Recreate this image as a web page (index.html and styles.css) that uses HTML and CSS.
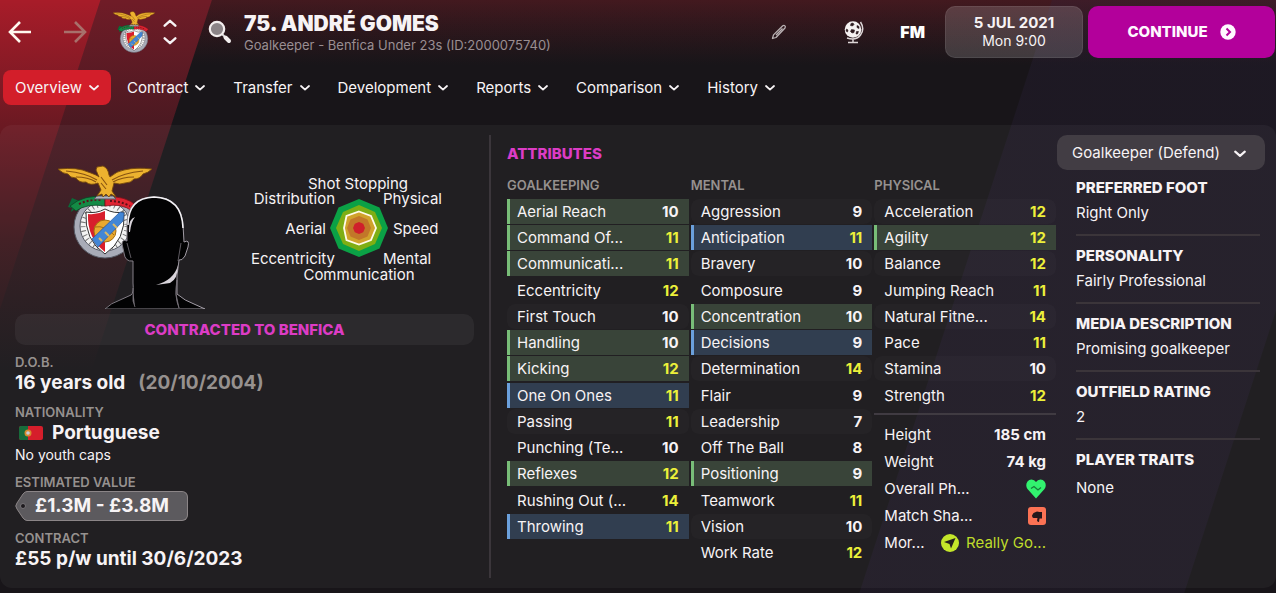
FILE: index.html
```html
<!DOCTYPE html>
<html lang="en">
  <head>
    <meta charset="UTF-8" />
    <meta name="viewport" content="width=device-width, initial-scale=1.0" />
    <title>André Gomes - Overview</title>
    <link rel="stylesheet" href="styles.css">
  </head>
  <body>
    <!-- shared icons -->
    <svg class="defs" aria-hidden="true">
      <symbol id="chevron" viewBox="0 0 10 6">
        <path d="M1 1l4 3.6L9 1" fill="none" stroke="currentColor" stroke-width="1.8" stroke-linecap="round" stroke-linejoin="round" />
      </symbol>
      <symbol id="crest" viewBox="0 0 94 94">
        <path d="M14 33l-4 9 4 1-1 4c6-5 12-7 18-7z" fill="#0b6b39" />
        <circle cx="47" cy="62" r="31" fill="#a9acb8" stroke="#555964" stroke-width="1" />
        <circle cx="47" cy="61" r="25" fill="#f3f3f3" stroke="#555964" stroke-width="1" />
        <circle cx="47" cy="61" r="22" fill="none" stroke="#777" stroke-width="5" stroke-dasharray="1 3.5" />
        <path d="M28 47q10 2 19-3 9 5 19 3 2 28-19 42-21-14-19-42z" fill="#fff" stroke="#333" stroke-width="1" />
        <path d="M30 49q9 1 17-3v41Q29 73 30 49z" fill="#d81e2c" />
        <circle cx="47" cy="66" r="11" fill="#e9a92f" stroke="#a56e12" stroke-width="1" />
        <path d="M37 62q10-2 19 8M40 73q2-10 13-15" fill="none" stroke="#a56e12" />
        <path d="M34 74l28-27 4 1-1 8-25 26z" fill="#4286d6" stroke="#28569b" stroke-width=".7" />
        <path d="M41 73l3 3M47 67l4 4M55 59l4 4" stroke="#d9b868" stroke-width="2" />
        <path d="M12 41q14-12 35-9v9q-18-3-29 5z" fill="#148a45" stroke="#0a4524" stroke-width=".8" />
        <path d="M47 32q20-2 32 9l-5 5q-10-8-27-5z" fill="#df2331" stroke="#7d0f19" stroke-width=".8" />
        <path d="M21 39q11-5 22-4M52 36q10 0 20 5" fill="none" stroke="#5b1018" stroke-width="2" stroke-dasharray="2 2" />
        <path d="M39 31h16l3 3H36z" fill="#b4b6bf" stroke="#565963" />
        <path d="M0 4q20-2 30 3 9 3 11 5l-3-7 1-3 6-1q5 2 6 9l1 2q7-6 14-7 12-3 28-1-4 4-9 5-3 5-9 5-3 4-9 4-5 2-11 0l-2 8 4 6-5-3-2 3-3-3-3 3-1-3-5 2 4-6-3-7q-8 3-12-1-7 1-10-4-6 0-8-4-5 0-10-5z" fill="#edb22f" stroke="#76490b" stroke-width=".9" />
        <path d="M8 6q20 2 31 9M18 12q12 0 20 5M85 6q-20 2-31 9M76 12q-12 0-21 5M43 12l6 8M43 18l5 6" fill="none" stroke="#885411" stroke-width="1.1" />
      </symbol>
    </svg>

    <header class="topbar">
      <button class="icon-btn" aria-label="Back">
        <svg width="24" height="24" viewBox="0 0 24 24"><path d="M12 2L2 12l10 10M2 12h21" fill="none" stroke="#fff8ee" stroke-width="2.6" /></svg>
      </button>
      <button class="icon-btn forward" aria-label="Forward">
        <svg width="24" height="24" viewBox="0 0 24 24"><path d="M12 2l10 10-10 10M22 12H1" fill="none" stroke="#a8706b" stroke-width="2.6" /></svg>
      </button>
      <svg class="club" width="42" height="42" role="img" aria-label="Benfica"><use href="#crest" /></svg>
      <div class="stepper">
        <button class="icon-btn" aria-label="Previous player"><svg class="flip" width="14" height="8"><use href="#chevron" /></svg></button>
        <button class="icon-btn" aria-label="Next player"><svg width="14" height="8"><use href="#chevron" /></svg></button>
      </div>
      <button class="icon-btn search" aria-label="Search">
        <svg width="24" height="24" viewBox="0 0 24 24"><path d="M14 14l2.5 2.5" stroke="#ddd" stroke-width="2" /><path d="M17.500 17.500l3.500 3.500" stroke="#f3eeee" stroke-width="4" stroke-linecap="round" /><circle cx="9" cy="9" r="7.200" fill="#8b8487" stroke="#f3eeee" stroke-width="2.200" /></svg>
      </button>
      <div class="player-name">
        <h1>75. ANDRÉ GOMES</h1>
        <p>Goalkeeper - Benfica Under 23s (ID:2000075740)</p>
      </div>
      <button class="icon-btn edit" aria-label="Edit">
        <svg width="16" height="16" viewBox="0 0 16 16"><path d="M1.500 14.500l1-3.600L11.800 1.800q1.200-.8 2.100.1t.1 2.100L5 13.500zM5 11L11.500 4.500" fill="none" stroke="#b9b1b3" stroke-width="1.300" stroke-linejoin="round" /></svg>
      </button>
      <button class="icon-btn world" aria-label="World">
        <svg width="22" height="24" viewBox="0 0 22 24"><circle cx="10" cy="9.500" r="8.300" fill="#f5f1f1" /><path d="M8 3.500l2-.5 1 1.500-1.500 1.500-2-.5zM14 5.500l2 1v2l-2-1zM8.500 9.500l3 .5-.5 2.500-2 .5-1.500-1.500zM3.500 9l1.500 1-.5 2-1.500-1zM13.500 11.500l2 0-1 2.500-1.500 0z" fill="#2c1a1e" stroke="#2c1a1e" stroke-width=".6" /><path d="M17.500 2q4.500 7 0 13t-13.500 3M10 19v3M5 22.500h10" fill="none" stroke="#dcd5d6" stroke-width="1.500" /></svg>
      </button>
      <a class="fm" href="#">FM</a>
      <button class="date"><b>5 JUL 2021</b><span>Mon 9:00</span></button>
      <button class="continue">CONTINUE
        <svg width="16" height="16" viewBox="0 0 16 16"><circle cx="8" cy="8" r="7.700" fill="#fff8ff" /><path d="M6.500 4.500L10 8l-3.500 3.500" fill="none" stroke="#b3009b" stroke-width="2" /></svg>
      </button>
    </header>

    <nav class="tabs">
      <button class="active">Overview <svg><use href="#chevron" /></svg></button>
      <button>Contract <svg><use href="#chevron" /></svg></button>
      <button>Transfer <svg><use href="#chevron" /></svg></button>
      <button>Development <svg><use href="#chevron" /></svg></button>
      <button>Reports <svg><use href="#chevron" /></svg></button>
      <button>Comparison <svg><use href="#chevron" /></svg></button>
      <button>History <svg><use href="#chevron" /></svg></button>
    </nav>

    <main class="panel">
      <section class="bio">
        <div class="portrait">
          <svg width="160" height="149" viewBox="0 0 160 149" role="img" aria-label="Player portrait">
            <defs>
              <linearGradient id="rim" x1="0" y1="0" x2="1" y2="0">
                <stop offset="0" stop-color="#77727a" />
                <stop offset="1" stop-color="#a9a3ad" />
              </linearGradient>
            </defs>
            <use href="#crest" x="3" y="5" width="94" height="94" />
            <path d="M50 149q6-6 15-9l11-5q3-2 2-12V101q-8 1-9-8l-2-9q0-5 5-3V65q0-28 27-28t29 28l1 17q6-3 4 5l-3 9q-3 5-6 4-1 9-2 15v19q8 7 17 10l11 5z" fill="#020203" stroke="url(#rim)" stroke-width="1" />
            <path d="M73 65q0-27 26-28 28 1 29 31" fill="none" stroke="#f4f2f6" stroke-width="1.500" />
            <path d="M74 72q-1-13 6-15-4 5-5 15zM101 125q18-5 22-20 0 14-8 18-7 1-14 2z" fill="#d8d3da" />
            <path d="M122 120l-1 14 3 14q-5-12-2-28zM78 128v13l2 6M126 83l-3 18M72 83l4 15" fill="#77727a" stroke="#77727a" stroke-width=".8" />
          </svg>
          <svg class="radar" width="200" height="116" viewBox="0 0 200 116" role="img" aria-label="Attribute analyser">
            <g transform="translate(115 57)">
              <path d="M0-29L20.500-20.500 29 0 20.500 20.500 0 29-20.500 20.500-29 0-20.500-20.500z" fill="#0ba146" />
              <path d="M0-23L16-16 23 0 16 16 0 23-16 16-23 0-16-16z" fill="#7fae14" />
              <path d="M0-16.500L12-12 17 0 12 12 0 16.500-12.500 12-15 0-12.500-12z" fill="#d0a22b" stroke="#fffbe8" stroke-width="1.800" />
              <path d="M0-12L8.500-8.500 12 0 8.500 8.500 0 12-8.500 8.500-12 0-8.500-8.500z" fill="#c27729" />
              <path d="M0-6L4.200-4.200 6 0 4.200 4.200 0 6-4.200 4.200-6 0-4.200-4.200z" fill="#cf1f2b" />
            </g>
            <g class="middle"><text x="114" y="18">Shot Stopping</text><text x="115" y="109">Communication</text></g>
            <g class="end"><text x="91" y="33">Distribution</text><text x="82" y="63">Aerial</text><text x="91" y="93">Eccentricity</text></g>
            <g><text x="139" y="33">Physical</text><text x="149" y="63">Speed</text><text x="139" y="93">Mental</text></g>
          </svg>
        </div>

        <h2 class="contracted">CONTRACTED TO BENFICA</h2>

        <dl class="facts">
          <div>
            <dt>D.O.B.</dt>
            <dd>16 years old <span class="born">(20/10/2004)</span></dd>
          </div>
          <div>
            <dt>NATIONALITY</dt>
            <dd>
              <svg class="flag" width="24" height="14" viewBox="0 0 24 14"><rect width="24" height="14" rx="2" fill="#d61e2b" /><path d="M2 0h7v14H2q-2 0-2-2V2q0-2 2-2z" fill="#176b3b" /><circle cx="9" cy="7" r="3.500" fill="#d78a2b" /><circle cx="9" cy="7" r="1.800" fill="#c9ccd8" /></svg>
              Portuguese
            </dd>
            <dd class="small">No youth caps</dd>
          </div>
          <div>
            <dt>ESTIMATED VALUE</dt>
            <dd class="price">
              <svg width="20" height="30" viewBox="0 0 20 30"><path d="M20 .5h-8q-2 0-4 2.500L2 12q-2.500 3 0 6l6 9q2 2.500 4 2.500h8z" fill="#5c5a5e" /><path d="M20 .5h-8q-2 0-4 2.500L2 12q-2.500 3 0 6l6 9q2 2.500 4 2.500h8" fill="none" stroke="#8b8587" /><circle cx="8" cy="15" r="2.500" fill="#1d1a1e" stroke="#777478" /></svg>
              <span>£1.3M - £3.8M</span>
            </dd>
          </div>
          <div>
            <dt>CONTRACT</dt>
            <dd>£55 p/w until 30/6/2023</dd>
          </div>
        </dl>
      </section>

      <section class="attributes">
        <h2>ATTRIBUTES</h2>
        <div class="columns">
          <table>
            <caption>GOALKEEPING</caption>
            <tbody>
              <tr class="key"><th scope="row">Aerial Reach</th><td>10</td></tr>
              <tr class="key"><th scope="row">Command Of...</th><td class="good">11</td></tr>
              <tr class="key"><th scope="row">Communicati...</th><td class="good">11</td></tr>
              <tr><th scope="row">Eccentricity</th><td class="good">12</td></tr>
              <tr><th scope="row">First Touch</th><td>10</td></tr>
              <tr class="key"><th scope="row">Handling</th><td>10</td></tr>
              <tr class="key"><th scope="row">Kicking</th><td class="good">12</td></tr>
              <tr class="useful"><th scope="row">One On Ones</th><td class="good">11</td></tr>
              <tr><th scope="row">Passing</th><td class="good">11</td></tr>
              <tr><th scope="row">Punching (Te...</th><td>10</td></tr>
              <tr class="key"><th scope="row">Reflexes</th><td class="good">12</td></tr>
              <tr><th scope="row">Rushing Out (...</th><td class="good">14</td></tr>
              <tr class="useful"><th scope="row">Throwing</th><td class="good">11</td></tr>
            </tbody>
          </table>

          <table>
            <caption>MENTAL</caption>
            <tbody>
              <tr><th scope="row">Aggression</th><td>9</td></tr>
              <tr class="useful"><th scope="row">Anticipation</th><td class="good">11</td></tr>
              <tr><th scope="row">Bravery</th><td>10</td></tr>
              <tr><th scope="row">Composure</th><td>9</td></tr>
              <tr class="key"><th scope="row">Concentration</th><td>10</td></tr>
              <tr class="useful"><th scope="row">Decisions</th><td>9</td></tr>
              <tr><th scope="row">Determination</th><td class="good">14</td></tr>
              <tr><th scope="row">Flair</th><td>9</td></tr>
              <tr><th scope="row">Leadership</th><td>7</td></tr>
              <tr><th scope="row">Off The Ball</th><td>8</td></tr>
              <tr class="key"><th scope="row">Positioning</th><td>9</td></tr>
              <tr><th scope="row">Teamwork</th><td class="good">11</td></tr>
              <tr><th scope="row">Vision</th><td>10</td></tr>
              <tr><th scope="row">Work Rate</th><td class="good">12</td></tr>
            </tbody>
          </table>

          <div>
            <table>
              <caption>PHYSICAL</caption>
              <tbody>
                <tr><th scope="row">Acceleration</th><td class="good">12</td></tr>
                <tr class="key"><th scope="row">Agility</th><td class="good">12</td></tr>
                <tr><th scope="row">Balance</th><td class="good">12</td></tr>
                <tr><th scope="row">Jumping Reach</th><td class="good">11</td></tr>
                <tr><th scope="row">Natural Fitne...</th><td class="good">14</td></tr>
                <tr><th scope="row">Pace</th><td class="good">11</td></tr>
                <tr><th scope="row">Stamina</th><td>10</td></tr>
                <tr><th scope="row">Strength</th><td class="good">12</td></tr>
              </tbody>
            </table>
            <dl class="condition">
              <div><dt>Height</dt><dd>185 cm</dd></div>
              <div><dt>Weight</dt><dd>74 kg</dd></div>
              <div>
                <dt>Overall Ph...</dt>
                <dd><svg width="20" height="20" viewBox="0 0 20 20" role="img" aria-label="Fit"><path d="M10 19.500L1.500 10Q-1 6 1.500 2.500 3 .5 5.500 .5 8.500 .5 10 3q1.500-2.500 4.500-2.500 2.500 0 4 2Q21 6 18.500 10z" fill="#32f26f" /><path d="M5 9.500l3-2 4 3.500 3-2.500" fill="none" stroke="#187a3a" stroke-width="1.300" /></svg></dd>
              </div>
              <div>
                <dt>Match Sha...</dt>
                <dd><svg width="18" height="18" viewBox="0 0 18 18" role="img" aria-label="Poor"><rect width="18" height="18" rx="3" fill="#fb7254" /><path d="M4 8.500l1.500-2.500 3.500-1.500 2.500.5 2.500 0v6.500l-2.500 0-.5 3.500q-1.500 0-2-1.500l.5-2.500H5.500q-1.500-.5-1.500-2.500z" fill="#24171b" /></svg></dd>
              </div>
              <div>
                <dt>Mor...</dt>
                <dd class="morale"><svg width="18" height="18" viewBox="0 0 18 18" aria-hidden="true"><circle cx="9" cy="9" r="9" fill="#c4e62a" /><path d="M14.500 4L10 14.500 8.500 10 3 8z" fill="#24201f" /></svg>Really Go...</dd>
              </div>
            </dl>
          </div>
        </div>
      </section>

      <aside class="side">
        <div class="role">
          <select aria-label="Role">
            <option>Goalkeeper (Defend)</option>
          </select>
          <svg width="12" height="8"><use href="#chevron" /></svg>
        </div>
        <div class="info"><h3>PREFERRED FOOT</h3><p>Right Only</p></div>
        <div class="info"><h3>PERSONALITY</h3><p>Fairly Professional</p></div>
        <div class="info"><h3>MEDIA DESCRIPTION</h3><p>Promising goalkeeper</p></div>
        <div class="info"><h3>OUTFIELD RATING</h3><p>2</p></div>
        <div class="info"><h3>PLAYER TRAITS</h3><ul><li>None</li></ul></div>
      </aside>
    </main>
  </body>
</html>
```

FILE: styles.css
```css
* {
  box-sizing: border-box;
}

body {
  display: flex;
  flex-direction: column;
  margin: 0;
  min-height: 100vh;
  padding-bottom: 5px;
  color: #f7f3f5;
  font-family: Inter, "Liberation Sans", sans-serif;
  font-size: 15px;
  line-height: 24px;
  background:
    linear-gradient(108deg, transparent 1000px, rgba(46, 36, 66, 0.25) 1001px, rgba(46, 36, 66, 0.25) 1309px, transparent 1310px),
    linear-gradient(rgba(24, 21, 25, 0), rgba(24, 21, 25, 0.2) 60px, rgba(24, 21, 25, 0.42) 125px, rgba(24, 21, 25, 0.75) 240px, #181519 370px),
    linear-gradient(108deg, #a81c29 95px, #701c27 96px, #701c27 201px, transparent 202px),
    linear-gradient(#43191f, #181519 65px);
}

h1,
h2,
h3,
p,
dl,
dd,
ul {
  margin: 0;
  padding: 0;
}

button,
select {
  border: none;
  padding: 0;
  color: inherit;
  font: inherit;
  background: none;
  cursor: pointer;
}

svg {
  flex: none;
}

.defs {
  position: absolute;
  width: 0;
  height: 0;
}

/* top bar */

.topbar {
  display: flex;
  align-items: center;
  height: 62px;
  padding: 1px 1px 0 8px;
}

.icon-btn {
  display: flex;
}

.forward {
  margin-left: 31px;
}

.club {
  margin-left: 26px;
}

.stepper {
  display: flex;
  flex-direction: column;
  gap: 10px;
  margin-left: 8px;
}

.flip {
  transform: rotate(180deg);
}

.search {
  margin-left: 31px;
}

.player-name {
  flex: 1;
  margin-left: 12px;
  padding-top: 3px;
}

.player-name h1 {
  font-size: 21px;
  font-weight: 900;
  line-height: 24px;
}

.player-name p {
  color: #9a8e92;
  font-size: 13px;
  line-height: 18px;
}

.world {
  margin-left: 56px;
}

.fm {
  margin: 0 20px 0 35px;
  color: #fff;
  font-size: 16px;
  font-weight: 900;
  text-decoration: none;
}

.date {
  display: flex;
  flex-direction: column;
  align-items: center;
  justify-content: center;
  width: 138px;
  height: 52px;
  margin-right: 5px;
  border: 1px solid rgba(255, 255, 255, 0.08);
  border-radius: 10px;
  background: rgba(255, 255, 255, 0.16);
  font-size: 14px;
  line-height: 18px;
}

.date b {
  font-size: 15px;
}

.continue {
  display: flex;
  align-items: center;
  justify-content: center;
  gap: 12px;
  width: 187px;
  height: 52px;
  border-radius: 10px;
  background: #b3009b;
  color: #fff8ff;
  font-weight: 800;
}

/* tabs */

.tabs {
  display: flex;
  gap: 4px;
  padding: 8px 3px 20px;
}

.tabs button {
  display: flex;
  align-items: center;
  gap: 7px;
  height: 35px;
  padding: 0 12px;
  border-radius: 8px;
}

.tabs .active {
  background: #d31e2a;
}

.tabs svg {
  width: 10px;
  height: 6px;
}

/* main panel */

.panel {
  display: grid;
  flex: 1;
  grid-template-columns: 476fr 566fr 208fr;
  padding: 10px 11px 10px 15px;
  border-radius: 12px;
  background: rgba(255, 255, 255, 0.045);
}

.bio {
  padding-right: 15px;
  border-right: 2px solid #3b363b;
}

.portrait {
  display: flex;
  align-items: flex-end;
  gap: 29px;
  height: 174px;
  padding-left: 40px;
}

.radar {
  margin-bottom: 22px;
  overflow: visible;
}

.radar text {
  fill: #f7f3f5;
}

.middle {
  text-anchor: middle;
}

.end {
  text-anchor: end;
}

.contracted,
.attributes h2 {
  color: #dc3cc5;
  font-size: 15px;
  font-weight: 800;
}

.contracted {
  margin-top: 5px;
  border-radius: 10px;
  background: rgba(255, 255, 255, 0.05);
  line-height: 31px;
  text-align: center;
}

.facts > div {
  margin-top: 8px;
}

.facts dt,
caption {
  color: #96918f;
  font-size: 13px;
  font-weight: 600;
}

.facts dt {
  line-height: 18px;
}

.facts dd {
  display: flex;
  align-items: center;
  font-size: 19px;
  font-weight: 700;
}

.facts .small {
  font-size: 14px;
  font-weight: 400;
  line-height: 20px;
}

.born {
  margin-left: 13px;
  color: #96918f;
}

.flag {
  margin: 0 9px 0 4px;
}

.price span {
  height: 30px;
  padding-right: 18px;
  border: 1px solid #8b8587;
  border-left: none;
  border-radius: 0 6px 6px 0;
  background: #5c5a5e;
  line-height: 28px;
}

/* attributes */

.attributes {
  padding: 7px 1px 0 16px;
}

.columns {
  display: grid;
  grid-template-columns: repeat(3, 1fr);
  align-items: start;
  gap: 2px;
  margin-top: 7px;
}

.attributes table {
  width: 100%;
  border-spacing: 0;
}

caption {
  padding-bottom: 2px;
  text-align: left;
}

.attributes th,
.attributes td {
  height: 26px;
  padding: 0 10px;
  border-bottom: 1px solid transparent;
  background-clip: padding-box;
  white-space: nowrap;
}

.attributes tr:nth-child(4n) > * {
  height: 27px;
  border-top: 1px solid transparent;
}

.attributes th {
  padding-right: 0;
  border-radius: 8px 0 0 8px;
  font-weight: 400;
  text-align: left;
}

.attributes td {
  padding-left: 0;
  border-radius: 0 8px 8px 0;
  font-weight: 700;
  text-align: right;
}

.attributes .good {
  color: #ecf03a;
}

.attributes tr:nth-child(odd) > * {
  background-color: rgba(255, 255, 255, 0.02);
}

.attributes tr.key > * {
  border-radius: 0;
  background-color: #394439;
}

.attributes tr.useful > * {
  border-radius: 0;
  background-color: #313e50;
}

.key th {
  box-shadow: inset 3px 0 #78bd78;
}

.useful th {
  box-shadow: inset 3px 0 #6ba0dc;
}

.condition {
  margin-top: 4px;
  padding: 6px 10px 0;
  border-top: 2px solid #403b42;
}

.condition div {
  display: flex;
  align-items: center;
  justify-content: space-between;
  height: 27px;
}

.condition dd {
  display: flex;
  align-items: center;
  font-weight: 700;
}

.condition .morale {
  gap: 7px;
  color: #bfdc2b;
  font-weight: 400;
}

/* side column */

.role {
  position: relative;
}

.role select {
  width: 100%;
  height: 35px;
  padding: 0 15px;
  border-radius: 10px;
  background: #423d44;
  appearance: none;
}

.role svg {
  position: absolute;
  top: 15px;
  right: 19px;
  pointer-events: none;
}

.info {
  margin: 0 5px 0 19px;
  padding: 8px 0 9px;
  border-bottom: 2px solid #3b353a;
}

.info p {
  margin-top: 1px;
}

.role + .info {
  padding-top: 6px;
}

.info:last-child {
  border-bottom: none;
}

.info h3 {
  font-size: 15px;
  font-weight: 800;
}

.info ul {
  margin-top: 4px;
  list-style: none;
}
```
